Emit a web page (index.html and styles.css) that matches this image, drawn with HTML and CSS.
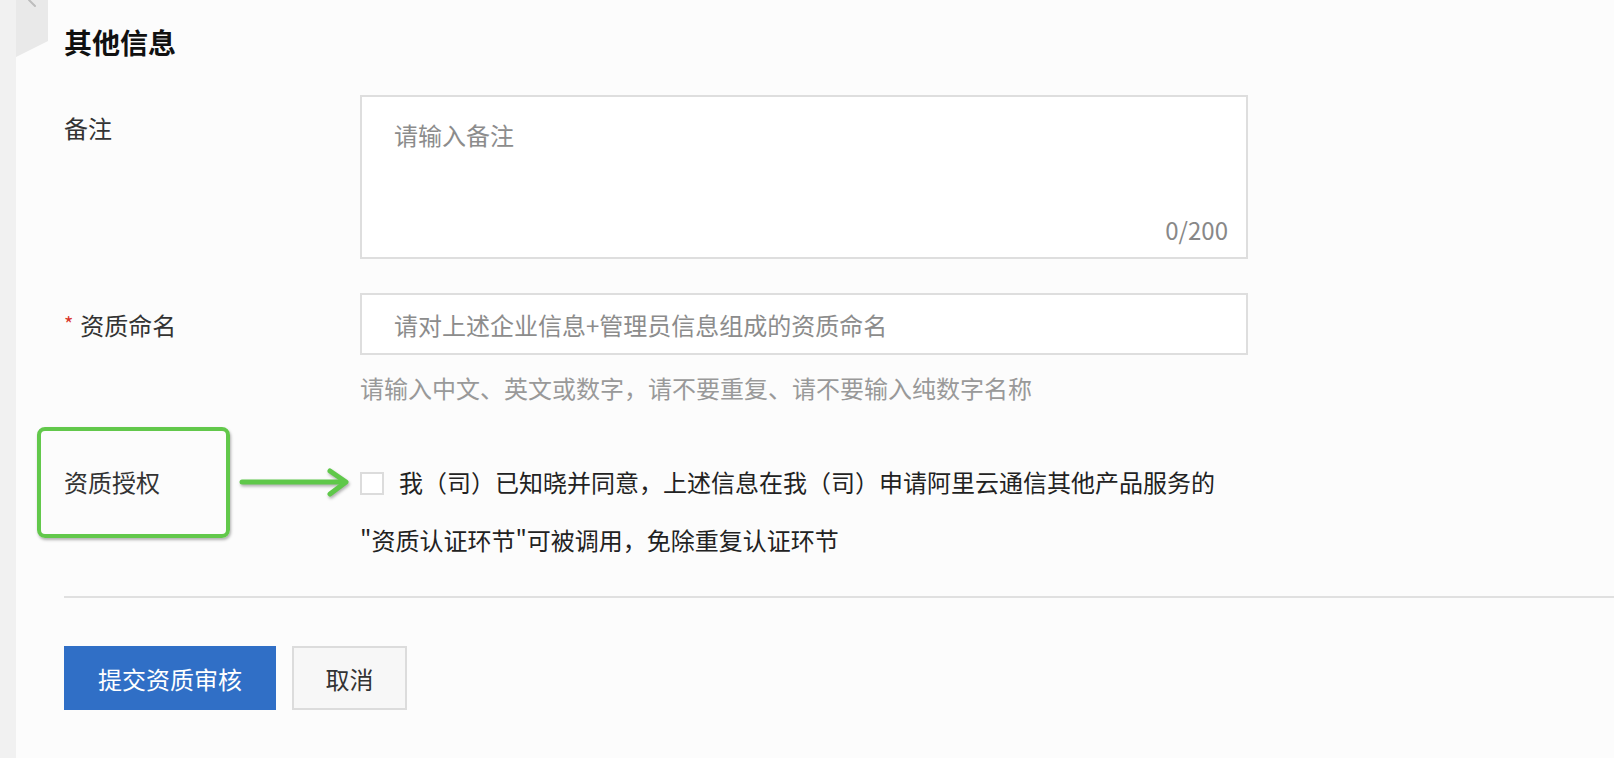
FILE: index.html
```html
<!DOCTYPE html>
<html lang="zh-CN">
<head>
  <meta charset="UTF-8" />
  <title>其他信息</title>
  <link rel="stylesheet" href="styles.css">
</head>
<body>
  <aside class="side-strip">
    <svg class="side-tab" width="32" height="60" viewBox="0 0 32 60">
      <polygon points="0,0 32,0 32,41 0,57" fill="#e9e9e9"/>
      <path d="M13 0 L19 6" stroke="#bdbdbd" stroke-width="2" stroke-linecap="round"/>
    </svg>
  </aside>
  <main class="page">
    <h2 class="section-title">其他信息</h2>

    <div class="form-row">
      <label class="form-label label-top">备注</label>
      <div class="field">
        <div class="textarea-wrap">
          <textarea class="textarea" placeholder="请输入备注"></textarea>
          <span class="counter">0/200</span>
        </div>
      </div>
    </div>

    <div class="form-row row-name">
      <label class="form-label label-input"><span class="required">*</span>资质命名</label>
      <div class="field">
        <input class="input" type="text" placeholder="请对上述企业信息+管理员信息组成的资质命名">
        <p class="help">请输入中文、英文或数字，请不要重复、请不要输入纯数字名称</p>
      </div>
    </div>

    <div class="form-row row-auth">
      <div class="note-box"></div>
      <svg class="note-arrow" width="116" height="32" viewBox="0 0 116 32">
        <g fill="none" stroke="#5fc84a" stroke-width="5" stroke-linecap="round" stroke-linejoin="round">
          <path d="M4 15 H106"/>
          <path d="M92 4 L108 15 L92 27"/>
        </g>
      </svg>
      <label class="form-label label-auth">资质授权</label>
      <div class="field auth-text"><span class="checkbox"></span>我（司）已知晓并同意，上述信息在我（司）申请阿里云通信其他产品服务的<br>"资质认证环节"可被调用，免除重复认证环节</div>
    </div>

    <div class="divider"></div>

    <div class="actions">
      <button class="btn btn-primary">提交资质审核</button>
      <button class="btn btn-default">取消</button>
    </div>
  </main>
</body>
</html>
```

FILE: styles.css
```css
body {
  margin: 0;
  padding: 0;
  display: flex;
  min-height: 758px;
  background-color: #fcfcfc;
  color: #333;
  font-family: "Noto Sans CJK SC", "Noto Sans", sans-serif;
  overflow: hidden;
}
.side-strip {
  width: 16px;
  flex: none;
  background-color: #f1f1f1;
  position: relative;
}
.side-tab {
  position: absolute;
  left: 16px;
  top: 0;
}
.page {
  flex: 1;
  padding: 22px 0 0 48px;
}
.section-title {
  margin: 0;
  font-size: 28px;
  line-height: 40px;
  font-weight: bold;
  color: #111;
}
.form-row {
  display: flex;
  position: relative;
  margin-top: 33px;
}
.row-name {
  margin-top: 34px;
}
.row-auth {
  margin-top: 48px;
}
.form-label {
  width: 296px;
  flex: none;
  font-size: 24px;
  color: #333;
}
.label-top {
  line-height: 34px;
  padding-top: 16px;
}
.label-input {
  line-height: 62px;
}
.label-auth {
  line-height: 58px;
}
.required {
  color: #d9362b;
  font-size: 20px;
  margin-right: 7px;
  vertical-align: 3px;
}
.field {
  width: 888px;
}
.textarea-wrap {
  position: relative;
}
.textarea, .input {
  display: block;
  box-sizing: border-box;
  width: 888px;
  border: 2px solid #dedede;
  background-color: #fff;
  font-family: "Noto Sans CJK SC", sans-serif;
  font-size: 24px;
  color: #333;
  outline: none;
  margin: 0;
}
.textarea {
  height: 164px;
  padding: 21px 32px;
  line-height: 34px;
  resize: none;
}
.input {
  height: 62px;
  padding: 0 32px;
}
.textarea::placeholder, .input::placeholder {
  color: #8c8c8c;
}
.counter {
  position: absolute;
  right: 20px;
  bottom: 12px;
  font-size: 24px;
  line-height: 34px;
  color: #888;
}
.help {
  margin: 16px 0 0;
  font-size: 24px;
  line-height: 34px;
  color: #999;
}
.auth-text {
  width: 900px;
  font-size: 24px;
  line-height: 58px;
  color: #222;
  white-space: nowrap;
}
.checkbox {
  display: inline-block;
  box-sizing: border-box;
  width: 24px;
  height: 23px;
  border: 2px solid #dcdcdc;
  background-color: #fff;
  margin-right: 15px;
  vertical-align: -3px;
}
.note-box {
  position: absolute;
  left: -27px;
  top: -26px;
  width: 193px;
  height: 111px;
  box-sizing: border-box;
  border: 4px solid #62c84b;
  border-radius: 8px;
  box-shadow: 1px 2px 3px rgba(0, 0, 0, 0.3);
}
.note-arrow {
  position: absolute;
  left: 174px;
  top: 14px;
  filter: drop-shadow(1px 2px 1.5px rgba(0, 0, 0, 0.3));
}
.divider {
  height: 2px;
  background-color: #e0e0e0;
  margin-top: 27px;
}
.actions {
  display: flex;
  gap: 16px;
  margin-top: 48px;
}
.btn {
  height: 64px;
  font-family: "Noto Sans CJK SC", sans-serif;
  font-size: 24px;
  cursor: pointer;
  box-sizing: border-box;
}
.btn-primary {
  width: 212px;
  border: none;
  background-color: #306fc6;
  color: #fff;
}
.btn-default {
  width: 115px;
  border: 2px solid #dcdcdc;
  background-color: #f7f7f7;
  color: #333;
}
```
